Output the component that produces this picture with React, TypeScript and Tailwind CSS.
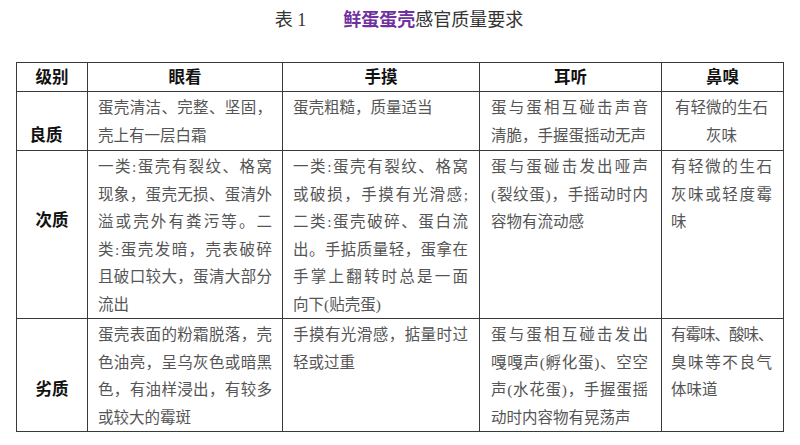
const cjk = { fontFamily: '"Liberation Serif", "Noto Sans CJK SC", serif' };

type Cell = { lines: string[]; center?: boolean };

interface Row {
  label: string;
  labelPad: string;
  height: string;
  cells: Cell[];
}

const rows: Row[] = [
  {
    label: "良质",
    labelPad: "pt-[30px] pr-[12px]",
    height: "h-[59px]",
    cells: [
      { lines: ["蛋壳清洁、完整、坚固，", "壳上有一层白霜"] },
      { lines: ["蛋壳粗糙，质量适当"] },
      { lines: ["蛋与蛋相互碰击声音", "清脆，手握蛋摇动无声"] },
      { lines: ["有轻微的生石", "灰味"], center: true },
    ],
  },
  {
    label: "次质",
    labelPad: "pt-[56px]",
    height: "h-[168px]",
    cells: [
      {
        lines: [
          "一类:蛋壳有裂纹、格窝",
          "现象，蛋壳无损、蛋清外",
          "溢或壳外有粪污等。二",
          "类:蛋壳发暗，壳表破碎",
          "且破口较大，蛋清大部分",
          "流出",
        ],
      },
      {
        lines: [
          "一类:蛋壳有裂纹、格窝",
          "或破损，手摸有光滑感;",
          "二类:蛋壳破碎、蛋白流",
          "出。手掂质量轻，蛋拿在",
          "手掌上翻转时总是一面",
          "向下(贴壳蛋)",
        ],
      },
      { lines: ["蛋与蛋碰击发出哑声", "(裂纹蛋)，手摇动时内", "容物有流动感"] },
      { lines: ["有轻微的生石", "灰味或轻度霉", "味"] },
    ],
  },
  {
    label: "劣质",
    labelPad: "pt-[57px]",
    height: "h-[112px]",
    cells: [
      {
        lines: [
          "蛋壳表面的粉霜脱落，壳",
          "色油亮，呈乌灰色或暗黑",
          "色，有油样浸出，有较多",
          "或较大的霉斑",
        ],
      },
      { lines: ["手摸有光滑感，掂量时过", "轻或过重"] },
      {
        lines: [
          "蛋与蛋相互碰击发出",
          "嘎嘎声(孵化蛋)、空空",
          "声(水花蛋)，手握蛋摇",
          "动时内容物有晃荡声",
        ],
      },
      { lines: ["有霉味、酸味、", "臭味等不良气", "体味道"] },
    ],
  },
];

const cellPad = ["pl-[10px] pr-[10px]", "pl-[10px] pr-[11px]", "pl-[11px] pr-[13px]", "pl-[9px] pr-[11px]"];

function CellLines({ cell }: { cell: Cell }) {
  return (
    <div className="pt-[2px] text-[15.5px] leading-[27.5px] text-[#555]">
      {cell.lines.map((line, i) => {
        const last = i === cell.lines.length - 1;
        let cls = "whitespace-nowrap";
        if (cell.center) cls += " text-center";
        else if (!last) cls += " text-justify [text-align-last:justify]";
        if (line === "有霉味、酸味、") cls += " tracking-[-1px]";
        return (
          <div key={i} className={cls}>
            {line}
          </div>
        );
      })}
    </div>
  );
}

export default function App() {
  return (
    <div className="w-[800px] h-[445px] bg-white pt-[10px]" style={cjk}>
      <div className="flex justify-center items-center h-[20px] text-[18px] text-[#333] pr-[2px]">
        <span>表 1</span>
        <span className="ml-[37px]">
          <span className="text-[#7030a0] font-bold">鲜蛋蛋壳</span>感官质量要求
        </span>
      </div>

      <table className="mt-[32px] ml-[16px] w-[767px] table-fixed border-collapse border border-[#3a3a3a]">
        <colgroup>
          <col className="w-[71px]" />
          <col className="w-[195px]" />
          <col className="w-[197px]" />
          <col className="w-[182px]" />
          <col className="w-[122px]" />
        </colgroup>
        <thead>
          <tr className="h-[29px]">
            {["级别", "眼看", "手摸", "耳听", "鼻嗅"].map((h) => (
              <th
                key={h}
                className="border border-[#3a3a3a] p-0 text-center align-middle text-[16.5px] font-bold text-[#111] leading-[27px]"
              >
                {h}
              </th>
            ))}
          </tr>
        </thead>
        <tbody>
          {rows.map((row) => (
            <tr key={row.label} className={row.height}>
              <td className={`border border-[#3a3a3a] p-0 align-top text-center ${row.labelPad}`}>
                <span className="text-[16.5px] font-bold text-[#111] leading-[28px]">{row.label}</span>
              </td>
              {row.cells.map((cell, i) => (
                <td key={i} className={`border border-[#3a3a3a] py-0 align-top ${cellPad[i]}`}>
                  <CellLines cell={cell} />
                </td>
              ))}
            </tr>
          ))}
        </tbody>
      </table>
    </div>
  );
}
